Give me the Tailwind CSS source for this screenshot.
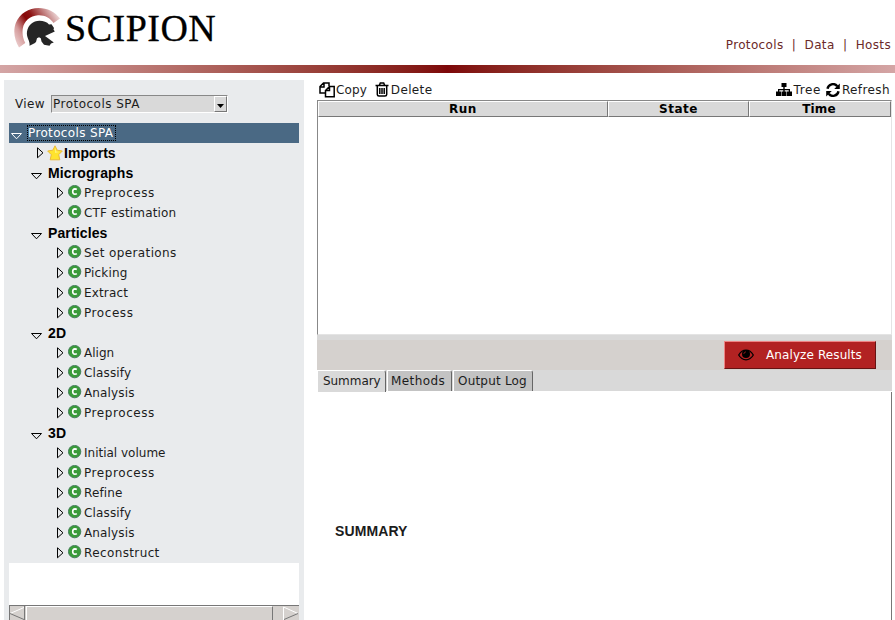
<!DOCTYPE html>
<html lang="en">
<head>
<meta charset="utf-8">
<title>Scipion</title>
<script src="https://cdn.jsdelivr.net/npm/@tailwindcss/browser@4"></script>
</head>
<body class="w-[895px] h-[620px] overflow-hidden bg-white font-['DejaVu_Sans',sans-serif] text-[12px] leading-[20px] tracking-[0.35px] text-[#1c1c1c] flex flex-col">
<svg class="hidden">
  <symbol id="closed" viewBox="0 0 7 12"><path d="M.5 .8V10.800L6 5.800Z" fill="none" stroke="#000"/></symbol>
  <symbol id="open" viewBox="0 0 11 7"><path d="M.5 .5H10.500L5.500 5.800Z" fill="none" stroke="currentColor"/></symbol>
  <symbol id="cls" viewBox="0 0 14 14"><circle cx="6.600" cy="6.600" r="6.200" fill="#3a9b3a" stroke="#3f7a58" stroke-width=".9"/><path d="M8.800 4.500Q8 3.900 7 3.900Q4.700 4 4.700 6.600T7 9.300Q8 9.300 8.800 8.700" fill="none" stroke="#fff" stroke-width="1.600"/></symbol>
</svg>

<header class="h-[65px] flex shrink-0 justify-between">
  <div class="flex pl-[13px]">
    <svg class="w-[48px] h-[48px] mt-[6px]" viewBox="13 6 48 48">
      <defs><linearGradient id="crest" gradientUnits="userSpaceOnUse" x1="17" y1="48" x2="60" y2="20"><stop offset="0" stop-color="#eed4d4"/><stop offset=".22" stop-color="#d49a9a"/><stop offset=".46" stop-color="#860707"/><stop offset=".58" stop-color="#8d1414"/><stop offset="1" stop-color="#ead0d0"/></linearGradient></defs>
      <path d="M19 47.500C14.500 40.500 12.800 31 15.800 23C19.500 13.500 29 8 38.500 8C47.500 8 55 12 60 18.500L53.500 23C50 17.500 44 14.800 38 15.200C30 15.700 24 21 22.800 28.500C22 34 23 38.500 25.300 43Z" fill="url(#crest)"/>
      <path d="M29.500 45.700C30.500 41 26 38 27 31.500C28.200 25 33 20.800 39.500 20.800C43.500 20.800 47 22 49 24.500L51.500 24.200L54 28L53.500 29.500L54.800 31.500L45 36L53.800 42.500L51 43.500L49.500 45.800L44 44.800L41.500 41.500L40.800 38.300L39 37.300L37 38.300L36 42L34.500 43.200Z" fill="#262626"/>
    </svg>
    <span class="ml-[4px] mt-[8px] font-['Liberation_Serif',serif] text-[38px] leading-[40px] tracking-[0.5px] text-black [-webkit-text-stroke:0.3px_black]">SCIPION</span>
  </div>
  <nav class="flex mt-[35px] pr-[4px] text-[#6b2929] whitespace-pre">Protocols  |  Data  |  Hosts</nav>
</header>
<div class="h-[8px] shrink-0 bg-linear-to-r from-[#d4a5a5] via-[#7d0709] to-[#d4a5a5]"></div>

<main class="flex flex-1 min-h-0">
  <aside class="w-[300px] ml-[4px] mt-[7px] bg-[#e9ebed] px-[5px] flex flex-col">
    <div class="flex h-[43px] pt-[14px] pl-[6px]">
      <span class="w-[36px]">View</span>
      <div class="w-[177px] h-[18px] mt-[1px] border-t border-l border-[#888] border-r border-b border-r-white border-b-white bg-[#d9d9d9] flex justify-between">
        <span class="pl-[1px] leading-[16px] tracking-[0.48px]">Protocols SPA</span>
        <span class="w-[13px] h-[16px] border border-l-white border-t-white border-r-[#777] border-b-[#777] flex items-center justify-center"><svg class="w-[7px] h-[4px] mt-[4px]" viewBox="0 0 7 4"><path d="M0 0H7L3.500 4Z"/></svg></span>
      </div>
    </div>
    <div class="h-[20px] shrink-0 bg-[#4a6984] text-white flex pl-[2px]">
      <svg class="w-[11px] h-[7px] mt-[10px]"><use href="#open"/></svg>
      <span class="ml-[5px] mt-[2px] h-[16px] w-[89px] leading-[14px] border border-dotted border-black whitespace-nowrap">Protocols SPA</span>
    </div>
    <div class="h-[20px] shrink-0 flex pl-[28px]">
      <svg class="w-[7px] h-[12px] mt-[4px]"><use href="#closed"/></svg>
      <svg class="w-[16px] h-[16px] mt-[2px] ml-[3px]" viewBox="0 0 16 16"><path d="M8 .8L10.200 5.200L15.300 6L11.700 9.700L12.800 14.800H3.200L4.300 9.700L.7 6L5.800 5.200Z" fill="#ffe32e" stroke="#e9b93b" stroke-linejoin="round"/><path d="M8 3L9.300 6.500L12.500 7L8 8Z" fill="#fff27a"/></svg>
      <span class="ml-[1px] font-['Liberation_Sans',sans-serif] font-bold text-[14px] tracking-[0.05px] text-black">Imports</span>
    </div>
    <div id="tree" class="shrink-0"></div>
    <div class="h-[42px] shrink-0 bg-white"></div>
    <div class="h-[15px] shrink-0 bg-[#d5d1ce] border-t border-[#777] flex">
      <svg class="w-[16px] h-[14px]" viewBox="0 0 16 14"><path d="M.5 0V14M15.500 0V14" stroke="#777"/><path d="M15 1.500L1 7.500" stroke="#fff"/><path d="M1 7.500L15 13.500" stroke="#777"/></svg>
      <div class="ml-[1px] w-[247px] border-l border-t border-white border-r border-r-[#777]"></div>
      <svg class="ml-[10px] w-[16px] h-[14px]" viewBox="0 0 16 14"><path d="M.5 14V1L15 7.500" fill="none" stroke="#fff"/><path d="M15 7.500L1 13.500" stroke="#777"/></svg>
    </div>
  </aside>

  <section class="ml-[13px] w-[575px] mt-[7px] flex flex-col">
    <div class="h-[20px] shrink-0 flex">
      <svg class="w-[16px] h-[16px] mt-[2px] ml-[2px]" viewBox="0 0 16 16" fill="none" stroke="#000" stroke-width="1.500"><path d="M10 4V1H4.500L1 4.500V11H6M5 1V5H1M15.200 4.500H10.500L6.500 8.500V14.800H15.200ZM10.500 4.500V8.500H6.500"/></svg>
      <span class="ml-[1px] tracking-[0.1px]">Copy</span>
      <svg class="w-[14px] h-[15px] mt-[2px] ml-[8px]" viewBox="0 0 14 15" fill="none" stroke="#000" stroke-width="1.500"><path d="M.5 3.500H13.500M4.500 3L5.300 1H8.700L9.500 3M2.300 3.500V12.500Q2.300 14 4 14H10Q11.700 14 11.700 12.500V3.500M4.800 6V12M7 6V12M9.200 6V12"/></svg>
      <span class="ml-[2px]">Delete</span>
      <div class="flex ml-auto pr-[2px]">
        <svg class="w-[16px] h-[13px] mt-[3px]" viewBox="0 0 16 13"><path d="M5.500 0H10.500V4H8.700V6H14V8.500H16V13H11V8.500H12.700V7.300H8.700V8.500H10.500V13H5.500V8.500H7.300V7.300H3.300V8.500H5V13H0V8.500H2V6H7.300V4H5.500Z"/></svg>
        <span class="ml-[1px] tracking-[0.6px]">Tree</span>
        <svg class="w-[14px] h-[14px] mt-[3px] ml-[5px]" viewBox="0 0 14 14"><path d="M1.500 5.800A5.500 5.500 0 0 1 11.300 3.300M12.500 8.200A5.500 5.500 0 0 1 2.700 10.700" fill="none" stroke="#000" stroke-width="2.400"/><path d="M13.800 .4V6H8.200ZM.2 13.600V8H5.800Z"/></svg>
        <span class="ml-[2px] tracking-[0.4px]">Refresh</span>
      </div>
    </div>
    <div class="h-[235px] shrink-0 border-l border-t border-[#888] border-r border-r-[#e4e4e4] border-b border-b-[#e4e4e4] flex items-start font-bold text-center leading-[15px] tracking-[0.5px] text-black">
      <div class="w-[290px] h-[16px] bg-[#d9d9d9] border border-t-white border-l-white border-r-[#777] border-b-[#777]">Run</div>
      <div class="w-[141px] h-[16px] bg-[#d9d9d9] border border-t-white border-l-white border-r-[#777] border-b-[#777]">State</div>
      <div class="w-[142px] h-[16px] pr-[2px] tracking-[0.2px] bg-[#d9d9d9] border border-t-white border-l-white border-r-[#777] border-b-[#777]">Time</div>
    </div>
    <div class="h-[5px] shrink-0 bg-[#d9d9d9]"></div>
    <div class="h-[30px] shrink-0 bg-[#d5d1ce] flex justify-end pr-[16px] pt-[1px]">
      <div class="w-[152px] h-[28px] bg-[#b22222] border border-t-[#ee8484] border-l-[#ee8484] border-r-[#651313] border-b-[#651313] flex items-center text-white tracking-[0.1px]">
        <svg class="w-[16px] h-[12px] ml-[13px]" viewBox="0 0 16 12"><path d="M.7 6Q3.500 1.200 8 1.200T15.300 6Q12.500 10.800 8 10.800T.7 6Z" fill="none" stroke="#000" stroke-width="1.300"/><circle cx="8" cy="5" r="4" fill="#000"/><path d="M5.800 5Q6 3 8 2.800" fill="none" stroke="#b22222" stroke-width=".7"/></svg>
        <span class="ml-[12px]">Analyze Results</span>
      </div>
    </div>
    <div class="h-[21px] ml-[1px] shrink-0 bg-[#d9d9d9] flex whitespace-nowrap">
      <div class="w-[68px] h-[22px] pl-[5px] tracking-[-0.05px] bg-[#d9d9d9] border-t border-t-white border-r border-r-[#666] rounded-tr-[3px]">Summary</div>
      <div class="w-[65px] ml-[1px] pl-[3px] tracking-[0.4px] bg-[#c3c3c3] border-t border-l border-t-white border-l-white border-r border-r-[#666] rounded-tr-[3px]">Methods</div>
      <div class="w-[80px] ml-[1px] pl-[4px] tracking-[0.2px] bg-[#c3c3c3] border-t border-l border-t-white border-l-white border-r border-r-[#666] rounded-tr-[3px]">Output Log</div>
    </div>
    <div class="flex-1 mt-[1px] border-r border-[#777] pl-[18px] pt-[129px] font-['Liberation_Sans',sans-serif] font-bold text-[14px] tracking-[0.1px]">SUMMARY</div>
  </section>
</main>
<script>
const wide = "tracking-[0.57px]", normal = "tracking-[0.38px]", snug = "tracking-[0.15px]", tight = "tracking-[0px]";
const groups = [
  ["Micrographs", [["Preprocess", wide], ["CTF estimation", snug]]],
  ["Particles", [["Set operations", normal], ["Picking", snug], ["Extract", snug], ["Process", wide]]],
  ["2D", [["Align", tight], ["Classify", snug], ["Analysis", snug], ["Preprocess", wide]]],
  ["3D", [["Initial volume", tight], ["Preprocess", wide], ["Refine", snug], ["Classify", snug], ["Analysis", snug], ["Reconstruct", normal]]]
];
document.getElementById("tree").innerHTML = groups.map(([name, items]) => `
  <div class="h-[20px] flex pl-[22px]"><svg class="w-[11px] h-[7px] mt-[10px] text-black"><use href="#open"/></svg><span class="ml-[6px] font-['Liberation_Sans',sans-serif] font-bold text-[14px] tracking-[0.12px] text-black">${name}</span></div>` +
  items.map(([t, tracking]) => `<div class="h-[20px] flex pl-[48px]"><svg class="w-[7px] h-[12px] mt-[4px]"><use href="#closed"/></svg><svg class="w-[14px] h-[14px] mt-[2px] ml-[4px]"><use href="#cls"/></svg><span class="ml-[2px] ${tracking}">${t}</span></div>`).join("")).join("");
</script>
</body>
</html>
